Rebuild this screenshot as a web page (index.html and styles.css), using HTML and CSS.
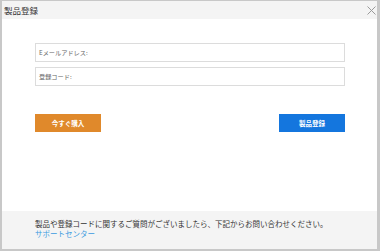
FILE: index.html
```html
<!DOCTYPE html>
<html lang="ja">
<head>
    <meta charset="UTF-8">
    <title>製品登録</title>
    <link rel="stylesheet" href="styles.css">
</head>
<body>
    <div class="window">
        <div class="titlebar">
            <span class="title">製品登録</span>
            <svg class="close" width="9" height="9" viewBox="0 0 9 9">
                <path d="M0.5 0.5 L8.5 8.5 M8.5 0.5 L0.5 8.5" stroke="#9a9a9a" stroke-width="1" fill="none"/>
            </svg>
        </div>

        <div class="content">
            <div class="field">Eメールアドレス:</div>
            <div class="field">登録コード:</div>

            <div class="actions">
                <button class="btn btn-buy">今すぐ購入</button>
                <button class="btn btn-register">製品登録</button>
            </div>
        </div>

        <div class="footer">
            <p>製品や登録コードに関するご質問がございましたら、下記からお問い合わせください。</p>
            <a href="#" class="support">サポートセンター</a>
        </div>
    </div>
</body>
</html>
```

FILE: styles.css
```css
* {
    box-sizing: border-box;
    margin: 0;
    padding: 0;
}

body {
    font-family: "Noto Sans CJK JP", "Noto Sans", sans-serif;
    background: #c8c8c8;
}

.window {
    width: 380px;
    height: 251px;
    display: flex;
    flex-direction: column;
    border-top: 1px solid #c8c8c8;
    border-left: 2px solid #c8c8c8;
    border-right: 3px solid #c8c8c8;
    border-bottom: 2px solid #c8c8c8;
    background: #f4f4f4;
}

.titlebar {
    height: 18px;
    display: flex;
    align-items: center;
    justify-content: space-between;
    padding: 0 1px 0 2px;
    background: #f4f4f4;
}

.title {
    font-size: 8.5px;
    color: #333;
}

.close {
    margin-top: 1px;
}

.content {
    flex: 1;
    background: #fff;
    padding: 24px 32px 0 33px;
}

.field {
    height: 19px;
    margin-bottom: 5px;
    padding-left: 3px;
    border: 1px solid #dcdcdc;
    font-size: 6.2px;
    line-height: 17px;
    color: #666;
}

.actions {
    display: flex;
    justify-content: space-between;
    margin-top: 28px;
}

.btn {
    width: 66px;
    height: 18px;
    border: none;
    color: #fff;
    font-family: inherit;
    font-size: 6.5px;
    font-weight: bold;
}

.btn-buy {
    background: #e0892b;
}

.btn-register {
    background: #1476de;
}

.footer {
    height: 38px;
    padding: 8px 0 0 33px;
    background: #f4f4f4;
    font-size: 7.5px;
    line-height: 10px;
    color: #333;
}

.support {
    color: #3c9be0;
    text-decoration: none;
}
```
